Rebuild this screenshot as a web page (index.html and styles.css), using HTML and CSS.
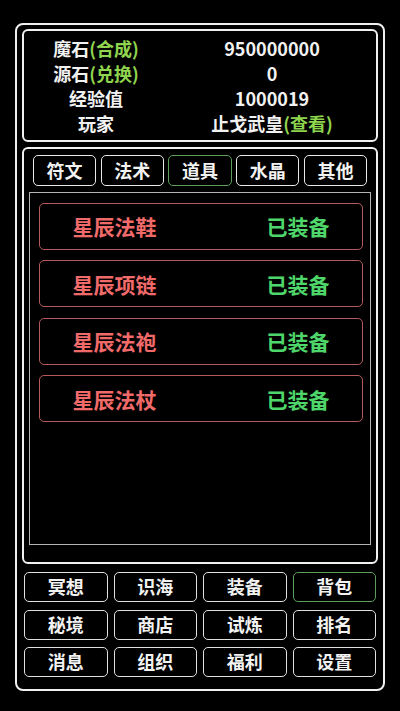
FILE: index.html
```html
<!DOCTYPE html>
<html lang="zh">
<head>
<meta charset="utf-8">
<link rel="stylesheet" href="styles.css">
</head>
<body>
<div class="frame">
  <div class="stats">
    <div class="row"><span class="k">魔石<span class="g">(合成)</span></span><span class="v">950000000</span></div>
    <div class="row"><span class="k">源石<span class="g">(兑换)</span></span><span class="v">0</span></div>
    <div class="row"><span class="k">经验值</span><span class="v">1000019</span></div>
    <div class="row"><span class="k">玩家</span><span class="v">止戈武皇<span class="g">(查看)</span></span></div>
  </div>
  <div class="panel">
    <div class="tabs">
      <div class="tab">符文</div>
      <div class="tab">法术</div>
      <div class="tab active">道具</div>
      <div class="tab">水晶</div>
      <div class="tab">其他</div>
    </div>
    <div class="list">
      <div class="item"><span class="name">星辰法鞋</span><span class="state">已装备</span></div>
      <div class="item"><span class="name">星辰项链</span><span class="state">已装备</span></div>
      <div class="item"><span class="name">星辰法袍</span><span class="state">已装备</span></div>
      <div class="item"><span class="name">星辰法杖</span><span class="state">已装备</span></div>
    </div>
  </div>
  <div class="menu">
    <div class="btn">冥想</div>
    <div class="btn">识海</div>
    <div class="btn">装备</div>
    <div class="btn active">背包</div>
    <div class="btn">秘境</div>
    <div class="btn">商店</div>
    <div class="btn">试炼</div>
    <div class="btn">排名</div>
    <div class="btn">消息</div>
    <div class="btn">组织</div>
    <div class="btn">福利</div>
    <div class="btn">设置</div>
  </div>
</div>
</body>
</html>
```
FILE: styles.css
```css
* { box-sizing: border-box; }
html, body { margin: 0; padding: 0; background: #000; }
body {
  font-family: "Noto Sans CJK SC", "Noto Sans", sans-serif;
  font-weight: 700;
  color: #f2f2f2;
  width: 400px;
  height: 711px;
  overflow: hidden;
}
.frame {
  margin: 23px 15px 0 15px;
  width: 370px;
  height: 668px;
  border: 2px solid #f0f0f0;
  border-radius: 8px;
  padding: 4px 5px 0 5px;
  display: flex;
  flex-direction: column;
}
.stats {
  height: 113px;
  border: 2px solid #f0f0f0;
  border-radius: 6px;
  padding: 5px 0;
}
.row {
  display: grid;
  grid-template-columns: 144px 1fr;
  height: 25px;
  line-height: 25px;
  font-size: 18px;
}
.row .k { text-align: center; }
.row .v { text-align: center; }
.g { color: #8fd44e; }
.panel {
  margin-top: 5px;
  height: 417px;
  border: 2px solid #f0f0f0;
  border-radius: 6px;
  padding: 6px 5px 17px 5px;
  display: flex;
  flex-direction: column;
}
.tabs {
  display: grid;
  grid-template-columns: repeat(5, 1fr);
  column-gap: 4.5px;
  padding: 0 4px;
  height: 31px;
}
.tab {
  border: 1.5px solid #e8e8e8;
  border-radius: 5px;
  text-align: center;
  font-size: 18px;
  line-height: 28px;
}
.tab.active { border-color: #5d9e5d; }
.list {
  margin-top: 6px;
  flex: 1;
  border: 1.5px solid #b4b4b4;
  padding: 9.5px 7.5px 0 8.5px;
  display: flex;
  flex-direction: column;
  gap: 10.5px;
}
.item {
  height: 47px;
  border: 1.5px solid #b45a5a;
  border-radius: 5px;
  display: flex;
  align-items: center;
  padding-left: 33px;
  font-size: 21px;
}
.name { color: #f06a6a; width: 194px; }
.state { color: #4fd66a; }
.menu {
  margin-top: 8px;
  padding: 0 2px;
  display: grid;
  grid-template-columns: repeat(4, 1fr);
  grid-auto-rows: 30px;
  column-gap: 6px;
  row-gap: 7.5px;
}
.btn {
  border: 1.5px solid #e0e0e0;
  border-radius: 5px;
  text-align: center;
  font-size: 18px;
  line-height: 27px;
}
.btn.active { border-color: #5d9e5d; }
```
